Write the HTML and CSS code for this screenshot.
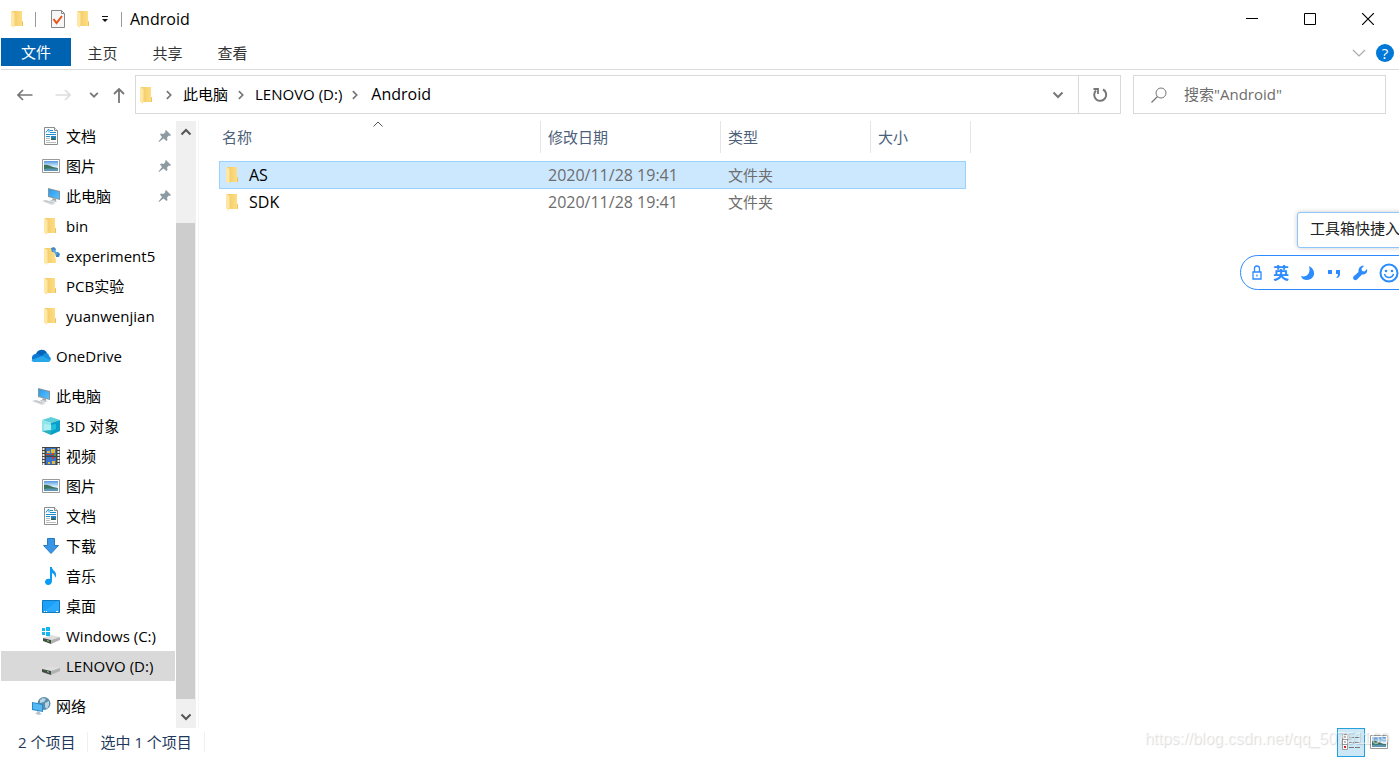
FILE: index.html
```html
<!DOCTYPE html>
<html lang="zh-CN">
<head>
    <meta charset="UTF-8">
    <meta name="viewport" content="width=device-width, initial-scale=1.0">
    <title>Android</title>
    <link rel="stylesheet" href="styles.css">
</head>
<body>
    <!-- icon shapes, used all over the window -->
    <svg class="sprite" aria-hidden="true">
        <linearGradient id="folderFill" x2="1"><stop offset="0" stop-color="#f0ca66"/><stop offset="1" stop-color="#ffdf87"/></linearGradient>
        <linearGradient id="skyFill" x2="0" y2="1"><stop offset="0" stop-color="#5599df"/><stop offset="0.6" stop-color="#e4f6fd"/></linearGradient>
        <linearGradient id="screenFill" x2="1" y2="1"><stop offset="0" stop-color="#279bec"/><stop offset="1" stop-color="#5bc2ff"/></linearGradient>
        <symbol id="folder" viewBox="0 0 18 18">
            <path d="M3 1h10v10l1 1v4H5z" fill="url(#folderFill)"/>
            <path d="M2 1l3.500 2v12l-1 3L2 15.500z" fill="#ffe8a6"/>
            <path d="M13 11l1 .5V16h-1z" fill="#eec25b"/>
        </symbol>
        <symbol id="folder-dots" viewBox="0 0 18 18">
            <path d="M3 1h10v10l1 1v4H5z" fill="url(#folderFill)"/>
            <path d="M2 1l3.500 2v12l-1 3L2 15.500z" fill="#ffe8a6"/>
            <path d="M9 1l3-1 2 2-1 3h-3zM13 5h3l2 2-1 3h-3z" fill="#3b88ca"/>
            <path d="M11 3l4 4" stroke="#5eade2" stroke-width="2"/>
        </symbol>
        <symbol id="doc" viewBox="0 0 18 18">
            <path d="M2.500.500h10l3 3v14h-13z" fill="#fff" stroke="#8c8c8c"/>
            <path d="M12.500.500v3h3" fill="#eee" stroke="#8c8c8c"/>
            <path d="M4 5.500l2-3h1v3M8 3.500h3M4 7.500h10M8 5.500h6M4 9.500h4" fill="none" stroke="#1b8ed0"/>
            <path d="M4 11.500h4M4 13.500h4M4 15.500h10" stroke="#bbb"/>
            <path d="M9 9h5v4H9z" fill="#287fb9"/>
            <path d="M9 12l3-1 2 2H9z" fill="#356654"/>
        </symbol>
        <symbol id="picture" viewBox="0 0 18 18">
            <path d="M.500 2.500h17v13H.500z" fill="#fff" stroke="#999"/>
            <path d="M2 4h14v10H2z" fill="url(#skyFill)"/>
            <path d="M2 8c3-1 6 1 9 2l5 1v1H2z" fill="#3e735d"/>
            <path d="M2 12c5-1 9 0 14-.5V14H2z" fill="#5c97b5"/>
        </symbol>
        <symbol id="pc" viewBox="0 0 18 18">
            <path d="M6 1l12 3v9L6 10z" fill="#88949c"/>
            <path d="M7 2l10 3v7L7 9z" fill="url(#screenFill)"/>
            <path d="M11 11l3 1v2l-4-1z" fill="#9ba6ac"/>
            <path d="M9 13l6 1-1 1-6-1z" fill="#b9c1c5"/>
            <path d="M0 14l3-1 11 3-4 2z" fill="#d5d9db"/>
            <path d="M2 14l8 2M4 13.500l8 2" stroke="#aab0b3" stroke-width=".6" stroke-dasharray="1 .6"/>
        </symbol>
        <symbol id="cloud" viewBox="0 0 20 18">
            <path d="M5 7a6 6 0 0 1 11-1l-5 4z" fill="#0364b8"/>
            <path d="M4 15a4 4 0 1 1 2-8c2 0 3 1 5 2l-5 6z" fill="#0f78d4"/>
            <path d="M11 9c3-5 7-3 7 0 3 2 2 6-2 6H4c-2 0-3-1-3.500-2z" fill="#1490df"/>
            <path d="M1 13l10-4 8 4c0 1-1 2-3 2H4c-2 0-3-1-3-2z" fill="#28a8ea"/>
        </symbol>
        <symbol id="cube" viewBox="0 0 18 18">
            <path d="M0 3l9-3 9 3-9 3z" fill="#5fd0da"/>
            <path d="M0 3l9 3v12l-9-4z" fill="#8fe5ea"/>
            <path d="M18 3L9 6v12l9-4z" fill="#0a9fc9"/>
            <path d="M2 7l7 1v5l-7 1z" fill="#c4f3f5" opacity=".6"/>
            <path d="M9 13v5l-9-4z" fill="#2bb0bf"/>
            <path d="M9 8l5-1v5l-5 2z" fill="#22bfdc"/>
        </symbol>
        <symbol id="film" viewBox="0 0 18 18">
            <path d="M0 0h18v18H0z" fill="#444"/>
            <path d="M4 1h10v7.500H4zM4 10h10v7.500H4z" fill="#3875cd"/>
            <path d="M1.500 1v17M16.500 1v17" stroke="#eee" stroke-width="2" stroke-dasharray="2 1"/>
            <path d="M5 4h3v2H5zM9 2h4v4H9zM6 15h2v2H6zM10 14h3v3h-3z" fill="#e3bb31"/>
            <path d="M4 7h5v1H4zM10 6h2v2h-2zM10 10h3l-2 3z" fill="#cf4226"/>
            <path d="M12 7h2v2h-2z" fill="#4b9a42"/>
        </symbol>
        <symbol id="download" viewBox="0 0 18 18">
            <path d="M5.500 1.500h7v7h4L9 16.500 1.500 8.500h4z" fill="#3996e6" stroke="#277bc4"/>
        </symbol>
        <symbol id="music" viewBox="0 0 18 18">
            <path d="M8 0h2c0 4 5 4 4 9l-1 2c0-3-1-4-3-5v8c0 5-7 5-7 1 0-3 3-4 5-3z" fill="#0b9bf4"/>
        </symbol>
        <symbol id="desktop" viewBox="0 0 18 18">
            <path d="M.500 3.500h17v12H.500z" fill="#1ba1fa" stroke="#1179bb"/>
            <path d="M1 15L16 4h1v11z" fill="#3cb1ff" opacity=".6"/>
            <path d="M2 14.500h1M4 14.500h1M14 14.500h2" stroke="#fff"/>
        </symbol>
        <symbol id="drive" viewBox="0 0 18 18">
            <path d="M0 12l9-3 9 2-9 3z" fill="#dedede"/>
            <path d="M0 12l9 2v4l-9-3z" fill="#484a48"/>
            <path d="M9 14l9-3v3l-9 4z" fill="#b2b2b2"/>
            <path d="M5 14.500l2 .7" stroke="#53f058"/>
        </symbol>
        <symbol id="windrive" viewBox="0 0 18 18">
            <path d="M1 11l8-3 9 2-9 3z" fill="#dedede"/>
            <path d="M1 11l8 2v4l-8-3z" fill="#484a48"/>
            <path d="M9 13l9-3v3l-9 4z" fill="#b2b2b2"/>
            <path d="M5 13.500l2 .7" stroke="#53f058"/>
            <path d="M0 1h3v3H0zM4 0h4v4H4zM0 5h3v3H0zM4 5h4v4H4z" fill="#15b5ef"/>
        </symbol>
        <symbol id="network" viewBox="0 0 18 18">
            <circle cx="12" cy="6.500" r="6.500" fill="#608eaa"/>
            <path d="M8 3l3-2 3 1-2 3-4 1zM13 6l4-2v4l-2 4-2-2z" fill="#b5d6e7"/>
            <path d="M0 5l11 2v8L0 13z" fill="#2789ca"/>
            <path d="M1 6l9 2v6l-9-2z" fill="#55b9f3"/>
            <path d="M5 14l3 .5v1.500l2 1-4 1-3-2 2-.5z" fill="#b4c4ce"/>
        </symbol>
        <symbol id="pin" viewBox="0 0 14 14">
            <path d="M8 1l5 5-1 1-1-.5-2 2 .5 2.500-1 1L5.500 9.500 1 13l-.5-.5L4 8 2 5.500l1-1 2.500.5 2-2L7 2z" fill="#8e9aa2"/>
        </symbol>
        <symbol id="chevron" viewBox="0 0 14 14">
            <path d="M2.500 4.500L7 9l4.500-4.500" fill="none" stroke="currentColor" stroke-width="2"/>
        </symbol>
        <symbol id="thin-chevron" viewBox="0 0 14 14">
            <path d="M1 4l6 6 6-6" fill="none" stroke="currentColor" stroke-width="1.200"/>
        </symbol>
    </svg>

    <div class="window">
        <header class="titlebar">
            <div class="quick">
                <svg class="icon"><use href="#folder"/></svg>
                <span class="bar"></span>
                <button class="plain" aria-label="属性">
                    <svg class="icon" viewBox="0 0 18 18"><path d="M2.500.500h10l3 3v14h-13z" fill="#f6f6f6" stroke="#888"/><path d="M12.500.500v3h3" fill="none" stroke="#888"/><path d="M4.500 9l3 4L13 6" fill="none" stroke="#e8551b" stroke-width="2"/></svg>
                </button>
                <button class="plain" aria-label="新建文件夹"><svg class="icon"><use href="#folder"/></svg></button>
                <button class="plain" aria-label="自定义快速访问工具栏"><svg width="8" height="8" viewBox="0 0 8 8"><path d="M1 1.500h6" stroke="#111"/><path d="M1 4h6L4 7z" fill="#111"/></svg></button>
                <span class="bar"></span>
            </div>
            <span class="title">Android</span>
            <div class="controls">
                <button class="plain" aria-label="最小化"><svg width="12" height="12"><path d="M0 5.500h12" stroke="#000"/></svg></button>
                <button class="plain" aria-label="最大化"><svg width="12" height="12"><path d="M.500.500h11v11H.500z" fill="none" stroke="#000"/></svg></button>
                <button class="plain" aria-label="关闭"><svg width="12" height="12"><path d="M0 0l12 12M12 0L0 12" stroke="#000" stroke-width="1.200"/></svg></button>
            </div>
        </header>

        <nav class="tabs">
            <button class="tab file">文件</button>
            <button class="tab">主页</button>
            <button class="tab">共享</button>
            <button class="tab">查看</button>
            <div class="tabs-right">
                <button class="plain fold" aria-label="展开功能区"><svg class="small"><use href="#thin-chevron"/></svg></button>
                <button class="help" aria-label="帮助">?</button>
            </div>
        </nav>

        <div class="address-row">
            <div class="arrows">
                <button class="plain" aria-label="后退"><svg width="16" height="14" viewBox="0 0 16 14"><path d="M15.500 7H1M6 2L1 7l5 5" fill="none" stroke="#777" stroke-width="1.700"/></svg></button>
                <button class="plain" aria-label="前进" disabled><svg width="16" height="14" viewBox="0 0 16 14"><path d="M.500 7H15M10 2l5 5-5 5" fill="none" stroke="#ddd" stroke-width="1.700"/></svg></button>
                <button class="plain history" aria-label="最近浏览的位置"><svg width="12" height="12"><use href="#chevron"/></svg></button>
                <button class="plain" aria-label="上移"><svg width="14" height="16" viewBox="0 0 14 16"><path d="M7 16V2M2 7l5-5 5 5" fill="none" stroke="#777" stroke-width="1.800"/></svg></button>
            </div>
            <div class="address">
                <svg class="icon"><use href="#folder"/></svg>
                <svg class="sep"><use href="#chevron"/></svg>
                <a href="#">此电脑</a>
                <svg class="sep"><use href="#chevron"/></svg>
                <a href="#">LENOVO (D:)</a>
                <svg class="sep"><use href="#chevron"/></svg>
                <a class="here" href="#">Android</a>
                <button class="plain drop" aria-label="以前的位置"><svg class="small"><use href="#chevron"/></svg></button>
                <button class="plain refresh" aria-label="刷新"><svg width="16" height="16" viewBox="0 0 16 16"><path d="M4 3.500a6 6 0 1 0 7-1" fill="none" stroke="#777" stroke-width="2"/><path d="M1.500 2H6v5" fill="none" stroke="#777" stroke-width="1.800"/></svg></button>
            </div>
            <label class="search">
                <svg width="16" height="16" viewBox="0 0 16 16"><circle cx="10" cy="6" r="5" fill="none" stroke="#777"/><path d="M6.500 9.500L.500 15.500" stroke="#777" stroke-width="1.200"/></svg>
                <input type="text" aria-label="搜索" placeholder='搜索"Android"'>
            </label>
        </div>

        <main class="main">
            <nav class="tree">
                <a class="item" href="#"><svg class="icon"><use href="#doc"/></svg>文档<svg class="pin"><use href="#pin"/></svg></a>
                <a class="item" href="#"><svg class="icon"><use href="#picture"/></svg>图片<svg class="pin"><use href="#pin"/></svg></a>
                <a class="item" href="#"><svg class="icon"><use href="#pc"/></svg>此电脑<svg class="pin"><use href="#pin"/></svg></a>
                <a class="item" href="#"><svg class="icon"><use href="#folder"/></svg>bin</a>
                <a class="item" href="#"><svg class="icon"><use href="#folder-dots"/></svg>experiment5</a>
                <a class="item" href="#"><svg class="icon"><use href="#folder"/></svg>PCB实验</a>
                <a class="item" href="#"><svg class="icon"><use href="#folder"/></svg>yuanwenjian</a>
                <a class="item root" href="#"><svg class="icon wide"><use href="#cloud"/></svg>OneDrive</a>
                <a class="item root" href="#"><svg class="icon wide"><use href="#pc"/></svg>此电脑</a>
                <a class="item" href="#"><svg class="icon"><use href="#cube"/></svg>3D 对象</a>
                <a class="item" href="#"><svg class="icon"><use href="#film"/></svg>视频</a>
                <a class="item" href="#"><svg class="icon"><use href="#picture"/></svg>图片</a>
                <a class="item" href="#"><svg class="icon"><use href="#doc"/></svg>文档</a>
                <a class="item" href="#"><svg class="icon"><use href="#download"/></svg>下载</a>
                <a class="item" href="#"><svg class="icon"><use href="#music"/></svg>音乐</a>
                <a class="item" href="#"><svg class="icon"><use href="#desktop"/></svg>桌面</a>
                <a class="item" href="#"><svg class="icon"><use href="#windrive"/></svg>Windows (C:)</a>
                <a class="item current" href="#"><svg class="icon"><use href="#drive"/></svg>LENOVO (D:)</a>
                <a class="item root" href="#"><svg class="icon wide"><use href="#network"/></svg>网络</a>
            </nav>
            <div class="scrollbar">
                <button class="plain up" aria-label="向上滚动"><svg class="small"><use href="#chevron"/></svg></button>
                <div class="thumb"></div>
                <button class="plain" aria-label="向下滚动"><svg class="small"><use href="#chevron"/></svg></button>
            </div>
            <section class="files">
                <table>
                    <colgroup><col class="c-name"><col class="c-date"><col class="c-type"><col class="c-size"><col class="c-edge"></colgroup>
                    <thead>
                        <tr>
                            <th><button class="head">名称<svg class="sort" viewBox="0 0 10 6"><path d="M.500 5.500L5 1l4.500 4.500" fill="none" stroke="#555"/></svg></button></th>
                            <th><button class="head">修改日期</button></th>
                            <th><button class="head">类型</button></th>
                            <th colspan="2"><button class="head">大小</button></th>
                        </tr>
                    </thead>
                    <tbody>
                        <tr class="selected">
                            <td><span class="name"><svg class="icon"><use href="#folder"/></svg>AS</span></td>
                            <td class="date">2020/11/28 19:41</td>
                            <td>文件夹</td>
                            <td></td>
                        </tr>
                        <tr>
                            <td><span class="name"><svg class="icon"><use href="#folder"/></svg>SDK</span></td>
                            <td class="date">2020/11/28 19:41</td>
                            <td>文件夹</td>
                            <td></td>
                        </tr>
                    </tbody>
                </table>
            </section>
        </main>

        <footer class="status">
            <span>2 个项目</span>
            <span>选中 1 个项目</span>
            <div class="views">
                <button class="view on" aria-label="详细信息"><svg width="20" height="18" viewBox="0 0 20 18"><path d="M1.500 1.500h5v15h-5zM1.500 6.500h5M1.500 11.500h5" fill="#fff" stroke="#999"/><path d="M3 4h2M3 9h2" stroke="#777"/><path d="M3 13h2v2H3z" fill="#c22"/><path d="M8 4.500h5M14 4.500h5M8 9.500h5M14 9.500h5M8 14.500h5M14 14.500h5" stroke="#777"/></svg></button>
                <button class="view" aria-label="大图标"><svg class="icon"><use href="#picture"/></svg></button>
            </div>
        </footer>

        <!-- input method bar floating over the window -->
        <div class="ime-tip">工具箱快捷入</div>
        <div class="ime">
            <button class="plain" aria-label="锁定"><svg width="10" height="16" viewBox="0 0 10 16"><path d="M1 7h8v7H1zM2.500 7V3.500a2.500 2.500 0 0 1 5 0V7M5 9.500v2" fill="none" stroke="currentColor" stroke-width="1.300"/></svg></button>
            <button class="plain">英</button>
            <button class="plain" aria-label="月亮"><svg width="16" height="16" viewBox="0 0 16 16"><path d="M9 1c8 4 6 14-2 14-3 0-5-1-6-4 6 2 10-3 8-10z" fill="currentColor"/></svg></button>
            <button class="plain" aria-label="标点"><svg width="14" height="14" viewBox="0 0 14 14"><path d="M1 4h4v4H1zM9 4h4v4c0 2-1 4-4 4 1-1 2-2 2-4H9z" fill="currentColor"/></svg></button>
            <button class="plain" aria-label="工具"><svg width="16" height="16" viewBox="0 0 16 16"><path d="M12 1L9.500 3.500l.5 2.500 2.500.5L15 4c1 4-2 6-5 5.500l-5 5c-2 2-5-1-3.500-3l5-4.500C6 3 9 0 12 1z" fill="currentColor"/></svg></button>
            <button class="plain" aria-label="表情"><svg width="20" height="20" viewBox="0 0 20 20"><circle cx="10" cy="10" r="8.500" fill="none" stroke="currentColor" stroke-width="2"/><circle cx="7" cy="8" r="1.300" fill="currentColor"/><circle cx="13" cy="8" r="1.300" fill="currentColor"/><path d="M5.500 11c1.500 4.500 7.500 4.500 9 0" fill="none" stroke="currentColor" stroke-width="1.500"/></svg></button>
        </div>
        <div class="watermark">https://blog.csdn.net/qq_50751169</div>
    </div>
</body>
</html>
```
FILE: styles.css
```css
* {
    box-sizing: border-box;
}
body {
    margin: 0;
    font-family: "Open Sans", "Noto Sans CJK SC", sans-serif;
    font-size: 15px;
    line-height: 20px;
    color: #000;
    background: #fff;
}
a {
    color: inherit;
    text-decoration: none;
}
button, input {
    font: inherit;
    color: inherit;
    border: none;
    background: none;
    padding: 0;
}
svg {
    display: block;
    flex: none;
}
.sprite {
    position: absolute;
    width: 0;
    height: 0;
}
.icon {
    width: 18px;
    height: 18px;
}
.small {
    width: 14px;
    height: 14px;
}
.plain {
    display: flex;
    align-items: center;
    justify-content: center;
}
.window {
    position: relative;
    display: flex;
    flex-direction: column;
    height: 100vh;
    padding-left: 1px;
    overflow: hidden;
}

/* title bar */
.titlebar {
    display: flex;
    align-items: center;
    height: 38px;
}
.quick {
    display: flex;
    align-items: center;
    gap: 8px;
    padding-left: 8px;
}
.bar {
    width: 1px;
    height: 15px;
    background: #999;
}
.quick .bar:nth-child(2) {
    margin-right: 5px;
}
.quick .bar:last-child {
    margin-left: 4px;
}
.title, .here, .name, .date {
    font-size: 16px;
}
.title {
    padding-left: 8px;
}
.controls {
    display: flex;
    margin-left: auto;
    padding-right: 2px;
}
.controls button {
    width: 58px;
    height: 38px;
}

/* ribbon tabs */
.tabs {
    display: flex;
    height: 32px;
    border-bottom: 1px solid #dadbdc;
}
.tab {
    width: 65px;
    height: 29px;
    color: #333;
}
.file {
    width: 70px;
    height: 28px;
    background: #0063b1;
    color: #fff;
    margin-right: -1px;
}
.tabs-right {
    display: flex;
    align-items: center;
    gap: 10px;
    margin-left: auto;
    padding-right: 5px;
    padding-bottom: 2px;
}
.fold {
    color: #aaa;
}
.help {
    width: 18px;
    height: 18px;
    border-radius: 50%;
    background: #0078d7;
    color: #fff;
    font-size: 15px;
    line-height: 18px;
}

/* address and search */
.address-row {
    display: flex;
    padding: 5px 13px 7px 0;
}
.arrows {
    display: flex;
    align-items: center;
    width: 134px;
    gap: 22px;
    padding-left: 16px;
    color: #777;
}
.arrows .history {
    margin: 0 -10px 0 -5px;
}
.address {
    flex: 1;
    display: flex;
    align-items: center;
    height: 39px;
    border: 1px solid #d9d9d9;
    padding-left: 2px;
}
.address a {
    padding-bottom: 2px;
}
.sep {
    width: 12px;
    height: 12px;
    margin: 0 8px 0 7px;
    color: #777;
    transform: rotate(-90deg);
}
.here {
    padding-left: 2px;
}
.drop {
    width: 41px;
    height: 37px;
    margin-left: auto;
    color: #777;
}
.refresh {
    width: 42px;
    height: 37px;
    border-left: 1px solid #d9d9d9;
}
.search {
    display: flex;
    align-items: center;
    gap: 17px;
    width: 253px;
    margin-left: 12px;
    padding-left: 17px;
    border: 1px solid #d9d9d9;
}
.search input {
    flex: 1;
    min-width: 0;
    padding-bottom: 2px;
    outline: none;
}
.search input::placeholder {
    color: #6d6d6d;
    opacity: 1;
}

/* folder tree */
.main {
    flex: 1;
    display: flex;
    min-height: 0;
}
.tree {
    width: 174px;
    overflow: hidden;
}
.item {
    display: flex;
    align-items: center;
    gap: 6px;
    height: 30px;
    padding-left: 41px;
    padding-right: 3px;
    white-space: nowrap;
}
.root {
    margin-top: 10px;
    padding-left: 30px;
    gap: 5px;
}
.wide {
    width: 20px;
}
.current {
    background: #d9d9d9;
}
.pin {
    width: 14px;
    height: 14px;
    margin-left: auto;
}
.scrollbar {
    display: flex;
    flex-direction: column;
    width: 20px;
    margin-left: 1px;
    background: #f0f0f0;
    color: #555;
}
.scrollbar button {
    height: 22px;
}
.scrollbar .up svg {
    transform: rotate(180deg);
}
.thumb {
    flex: 1;
    width: 19px;
    margin-top: 80px;
    margin-bottom: 7px;
    background: #cdcdcd;
}

/* file list */
.files {
    flex: 1;
    margin-left: 2px;
    padding-left: 20px;
    border-left: 1px solid #f5f5f5;
}
table {
    width: 752px;
    table-layout: fixed;
    border-collapse: separate;
    border-spacing: 0;
}
.c-name {
    width: 322px;
}
.c-date {
    width: 180px;
}
.c-type {
    width: 150px;
}
.c-size {
    width: 95px;
}
.c-edge {
    width: 5px;
}
th {
    padding: 0 0 8px;
    font-weight: normal;
}
.head {
    position: relative;
    display: block;
    width: 100%;
    height: 32px;
    padding-left: 7px;
    border-right: 1px solid #e5e5e5;
    text-align: left;
    color: #4c607a;
}
th:first-child .head {
    padding-left: 3px;
}
.sort {
    position: absolute;
    top: 0;
    left: 48%;
    width: 10px;
    height: 6px;
}
td {
    height: 27px;
    padding: 0 0 2px 7px;
    color: #6d6d6d;
}
td:first-child {
    color: #000;
}
.name {
    display: flex;
    align-items: center;
    gap: 7px;
}
.selected td {
    height: 28px;
    padding-bottom: 0;
    background: #cce8ff;
    border: solid #99d1ff;
    border-width: 1px 0;
}
td:first-child {
    padding-left: 5px;
}
.selected td:first-child {
    border-left-width: 1px;
    padding-left: 4px;
}
.selected td:last-child {
    border-right-width: 1px;
}

/* status bar */
.status {
    display: flex;
    align-items: center;
    height: 30px;
    padding-left: 17px;
    padding-bottom: 2px;
    color: #1e395b;
}
.status span {
    padding-right: 12px;
    margin-right: 12px;
    border-right: 1px solid #f0f0f0;
}
.views {
    display: flex;
    margin-left: auto;
    padding-right: 6px;
}
.view {
    display: flex;
    align-items: center;
    justify-content: center;
    width: 28px;
    height: 29px;
}
.on {
    background: #cce8f6;
    border: 1px solid #26a0da;
}

/* things lying over the window */
.ime-tip {
    position: absolute;
    top: 212px;
    right: -4px;
    width: 106px;
    height: 36px;
    padding: 5px 0 0 12px;
    border: 1px solid #8ec5fa;
    border-radius: 3px;
    background: #fff;
    box-shadow: 0 0 5px rgba(0, 0, 0, 0.2);
    color: #222;
    white-space: nowrap;
}
.ime {
    position: absolute;
    top: 255px;
    right: -20px;
    display: flex;
    align-items: center;
    gap: 11px;
    width: 179px;
    height: 35px;
    padding-left: 11px;
    border: 1px solid #2b8bff;
    border-radius: 18px;
    background: #fff;
    color: #2b8bff;
    font-size: 16px;
    font-weight: 700;
}
.watermark {
    position: absolute;
    right: 10px;
    bottom: 9px;
    font-family: "Liberation Sans", Arial, sans-serif;
    font-size: 16px;
    color: rgba(255, 255, 255, 0.6);
    text-shadow: 1px 1px 1px rgba(0, 0, 0, 0.15);
    pointer-events: none;
}
```
